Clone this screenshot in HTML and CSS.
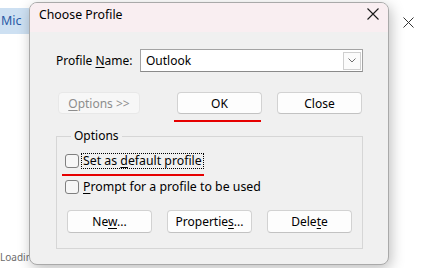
FILE: index.html
```html
<!DOCTYPE html>
<html lang="en">
<head>
    <meta charset="UTF-8">
    <meta name="viewport" content="width=device-width, initial-scale=1.0">
    <title>Choose Profile</title>
    <link rel="stylesheet" href="styles.css">
</head>
<body>
    <div class="side-left">
        <div class="app-tab">Mic</div>
        <div class="loading">Loadin</div>
    </div>

    <div class="dialog">
        <div class="title-bar">
            <span class="title">Choose Profile</span>
            <svg class="close-icon" width="12" height="12" viewBox="0 0 12 12">
                <path d="M0.5 0.5 L11.5 11.5 M11.5 0.5 L0.5 11.5" stroke="#1a1a1a" stroke-width="1.1" fill="none"/>
            </svg>
        </div>

        <div class="dialog-body">
            <div class="profile-row">
                <label class="profile-label">Profile <u>N</u>ame:</label>
                <div class="profile-select">
                    <span class="select-value">Outlook</span>
                    <span class="select-arrow">
                        <svg width="8" height="5" viewBox="0 0 8 5">
                            <path d="M0.5 0.5 L4 4 L7.5 0.5" stroke="#6f6f6f" stroke-width="1" fill="none"/>
                        </svg>
                    </span>
                </div>
            </div>

            <div class="button-row">
                <button class="btn btn-options" disabled><u>O</u>ptions &gt;&gt;</button>
                <div class="ok-wrap">
                    <button class="btn btn-ok">OK</button>
                    <div class="red-mark mark-ok"></div>
                </div>
                <button class="btn btn-close">Close</button>
            </div>

            <fieldset class="options-group">
                <legend>Options</legend>

                <div class="check-row">
                    <span class="checkbox"></span>
                    <span class="check-label focused">Set as <u>d</u>efault profile</span>
                </div>
                <div class="red-mark mark-default"></div>
                <div class="check-row second">
                    <span class="checkbox"></span>
                    <span class="check-label"><u>P</u>rompt for a profile to be used</span>
                </div>

                <div class="group-buttons">
                    <button class="btn">Ne<u>w</u>...</button>
                    <button class="btn">Propertie<u>s</u>...</button>
                    <button class="btn">Dele<u>t</u>e</button>
                </div>
            </fieldset>
        </div>
    </div>

    <div class="side-right">
        <svg class="parent-close" width="11" height="11" viewBox="0 0 11 11">
            <path d="M0.5 0.5 L10.5 10.5 M10.5 0.5 L0.5 10.5" stroke="#333" stroke-width="1" fill="none"/>
        </svg>
    </div>
</body>
</html>
```

FILE: styles.css
```css
body {
    margin: 0;
    padding: 0;
    width: 423px;
    height: 268px;
    overflow: hidden;
    display: flex;
    background-color: #ffffff;
    font-family: "Noto Sans", "Open Sans", sans-serif;
    font-size: 12px;
    color: #000;
}

u {
    text-decoration-thickness: 1px;
    text-underline-offset: 2px;
}

/* window behind the dialog */
.side-left {
    width: 29px;
    flex-shrink: 0;
    display: flex;
    flex-direction: column;
    justify-content: space-between;
    overflow: hidden;
    white-space: nowrap;
}

.app-tab {
    margin-top: 8px;
    height: 26px;
    line-height: 26px;
    padding-left: 1px;
    background-color: #cde0f2;
    color: #2a5aa5;
    font-size: 12.5px;
}

.loading {
    margin-bottom: 4px;
    color: #6b6b6b;
    font-size: 10px;
    line-height: 14px;
}

.side-right {
    flex: 1;
    display: flex;
    justify-content: flex-end;
    align-items: flex-start;
}

.parent-close {
    margin-top: 17px;
    margin-right: 9px;
}

/* dialog */
.dialog {
    width: 360px;
    height: 263px;
    margin-top: 2px;
    flex-shrink: 0;
    box-sizing: border-box;
    border: 1px solid #a9a9a9;
    border-radius: 8px;
    background-color: #f0f0f0;
    overflow: hidden;
    box-shadow: 2px 4px 14px rgba(0, 0, 0, 0.26);
    display: flex;
    flex-direction: column;
}

.title-bar {
    height: 29px;
    flex-shrink: 0;
    background-color: #f9eef1;
    display: flex;
    justify-content: space-between;
    align-items: flex-start;
    padding: 0 9px 0 9px;
}

.title {
    margin-top: 4px;
    line-height: 16px;
    font-size: 12.3px;
}

.close-icon {
    margin-top: 5px;
}

.dialog-body {
    padding: 17px 0 0 26px;
}

.profile-row {
    display: flex;
    align-items: center;
}

.profile-label {
    width: 84px;
}

.profile-select {
    width: 223px;
    height: 23px;
    box-sizing: border-box;
    border: 1px solid #a3a3a3;
    border-bottom-color: #8a8a8a;
    background-color: #fff;
    display: flex;
    align-items: center;
    justify-content: space-between;
    padding: 0 1px 0 5px;
}

.select-arrow {
    width: 18px;
    height: 18px;
    box-sizing: border-box;
    border: 1px solid #cfcfcf;
    background-color: #fbfbfb;
    display: flex;
    align-items: center;
    justify-content: center;
}

.button-row {
    display: flex;
    align-items: flex-start;
    margin-top: 20px;
}

.btn {
    height: 22px;
    width: 85px;
    box-sizing: border-box;
    padding: 0;
    border: 1px solid #d2d2d2;
    border-bottom-color: #c2c2c2;
    border-radius: 4px;
    background-color: #fdfdfd;
    font-family: inherit;
    font-size: 12px;
    color: #000;
}

.btn-options {
    width: 82px;
    margin-left: 2px;
    background-color: #f7f7f7;
    border-color: #e8e8e8;
    color: #8d8d8d;
}

.ok-wrap {
    display: flex;
    flex-direction: column;
    margin-left: 37px;
}

.btn-close {
    margin-left: 15px;
}

.red-mark {
    height: 2px;
    background-color: #e60000;
}

.mark-ok {
    width: 87px;
    margin-top: 6px;
    margin-left: -3px;
}

/* group box */
.options-group {
    width: 307px;
    box-sizing: border-box;
    margin: 6px 0 0 0;
    padding: 9px 0 15px 8px;
    border: 1px solid #d6d6d6;
}

.options-group legend {
    padding: 0 3px;
    margin-left: 6px;
    line-height: 16px;
}

.check-row {
    display: flex;
    align-items: center;
    height: 16px;
}

.check-row.second {
    margin-top: 3px;
}

.checkbox {
    width: 14px;
    height: 14px;
    box-sizing: border-box;
    border: 1px solid #7f7f7f;
    border-radius: 3px;
    background-color: #f6f6f6;
    margin-right: 3px;
}

.check-label {
    line-height: 14px;
    padding: 0 1px;
    font-size: 12.3px;
}

.check-label.focused {
    outline: 1px dotted #000;
}

.mark-default {
    width: 142px;
    margin: 5px 0 0 -3px;
}

.group-buttons {
    display: flex;
    gap: 15px;
    margin-top: 15px;
    margin-left: 2px;
}

.group-buttons .btn {
    height: 23px;
}
```
